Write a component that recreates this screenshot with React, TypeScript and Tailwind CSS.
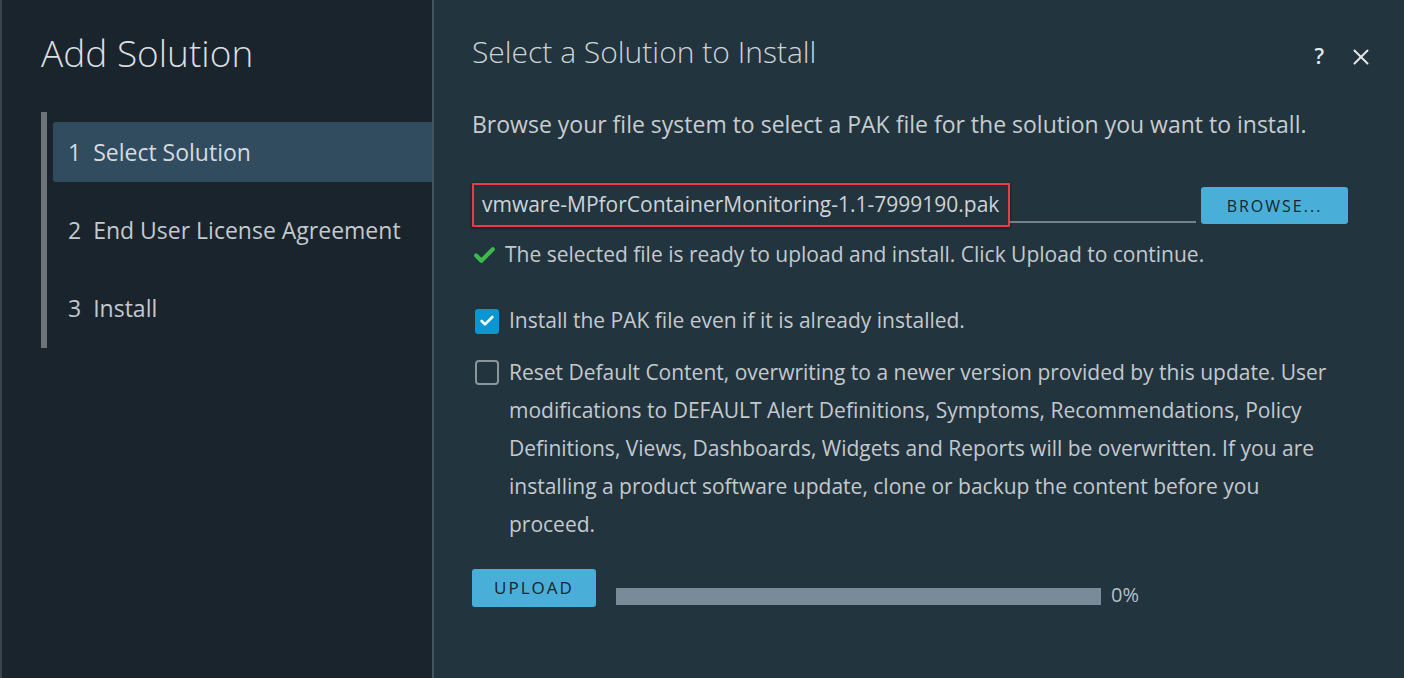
import { Check, X } from "lucide-react";

const steps = [
  { n: 1, label: "Select Solution", active: true },
  { n: 2, label: "End User License Agreement", active: false },
  { n: 3, label: "Install", active: false },
];

export default function App() {
  return (
    <div
      className="flex h-[678px] w-[1404px] overflow-hidden text-[#c9ced3]"
      style={{ fontFamily: "'Open Sans', sans-serif" }}
    >
      {/* Wizard nav */}
      <div className="w-[432px] shrink-0 border-l-2 border-[#3a444b] bg-[#1a242c] pl-[39px]">
        <h1 className="mt-[31px] text-[37px] font-light leading-[44px] text-[#dcdfe2]">
          Add Solution
        </h1>
        <div className="mt-[37px] flex">
          <div className="w-[6px] shrink-0 bg-[#6d7378]" />
          <ul className="flex-1 pt-[10px] pb-[10px] pl-[6px]">
            {steps.map((s) => (
              <li
                key={s.n}
                className={`flex h-[60px] items-center gap-[12px] rounded-l-[3px] pl-[15px] text-[23px] ${
                  s.active ? "bg-[#304c5e] text-[#d6dbe0]" : "text-[#c4c9ce]"
                } ${s.n > 1 ? "mt-[18px]" : ""}`}
              >
                <span>{s.n}</span>
                <span>{s.label}</span>
              </li>
            ))}
          </ul>
        </div>
      </div>

      {/* Content */}
      <div className="flex-1 border-l-2 border-[#46545c] bg-[#22343e] pl-[38px] pr-[30px]">
        <div className="mt-[32px] flex h-[40px] items-center justify-between">
          <h2 className="text-[30px] font-light leading-[40px] text-[#cfd3d6]">
            Select a Solution to Install
          </h2>
          <div className="mt-[10px] flex items-center gap-[24px] text-[#e4e6e8]">
            <span className="text-[21px] font-semibold">?</span>
            <X size={26} strokeWidth={1.8} />
          </div>
        </div>

        <p className="mt-[37px] text-[23px] leading-[30px] text-[#c7ccd1]">
          Browse your file system to select a PAK file for the solution you want to install.
        </p>

        <div className="mt-[44px] flex items-end">
          <div className="flex h-[44px] w-[538px] items-center rounded-[1px] border-2 border-[#ec3b44] pl-[8px] text-[21px] text-[#cfd3d7] shadow-[0_1px_3px_rgba(0,0,0,0.6)]">
            vmware-MPforContainerMonitoring-1.1-7999190.pak
          </div>
          <div className="mb-[4px] h-[2px] w-[186px] bg-[#75828b]" />
          <button className="ml-[5px] mb-[3px] h-[37px] w-[147px] rounded-[3px] bg-[#49afd9] text-[16px] tracking-[2px] text-[#17252d]">
            BROWSE...
          </button>
        </div>

        <div className="mt-[13px] flex h-[30px] items-center gap-[8px] text-[21px] text-[#c4c9ce]">
          <Check size={25} strokeWidth={4} className="text-[#3cba4a]" />
          <span>The selected file is ready to upload and install. Click Upload to continue.</span>
        </div>

        <label className="mt-[36px] flex h-[30px] items-center gap-[10px] pl-[3px] text-[21px] text-[#c4c9ce]">
          <span className="flex h-[25px] w-[24px] items-center justify-center rounded-[3px] bg-[#0a95d3]">
            <Check size={16} strokeWidth={4} className="text-white" />
          </span>
          <span>Install the PAK file even if it is already installed.</span>
        </label>

        <div className="mt-[17px] flex items-start gap-[10px] pl-[3px] text-[21px] leading-[38px] text-[#c4c9ce]">
          <span className="mt-[7px] h-[25px] w-[24px] shrink-0 rounded-[4px] border-2 border-[#8a959c]" />
          <p className="w-[830px]">
            Reset Default Content, overwriting to a newer version provided by this update. User
            modifications to DEFAULT Alert Definitions, Symptoms, Recommendations, Policy
            Definitions, Views, Dashboards, Widgets and Reports will be overwritten. If you are
            installing a product software update, clone or backup the content before you proceed.
          </p>
        </div>

        <div className="mt-[26px] flex items-start">
          <button className="h-[38px] w-[124px] rounded-[3px] bg-[#49afd9] text-[17px] tracking-[2px] text-[#17252d]">
            UPLOAD
          </button>
          <div className="ml-[20px] mt-[19px] h-[17px] w-[485px] bg-[#798a99]" />
          <span className="ml-[10px] mt-[14px] text-[20px] leading-[24px] text-[#b8bfc5]">0%</span>
        </div>
      </div>
    </div>
  );
}
